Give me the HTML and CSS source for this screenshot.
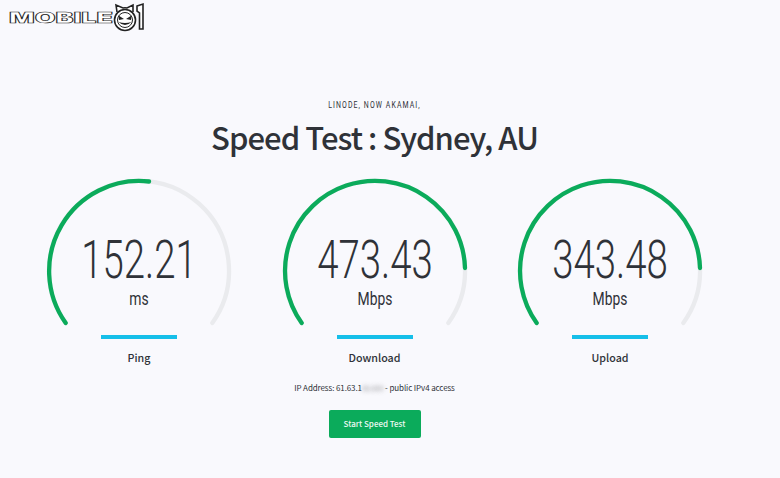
FILE: index.html
```html
<!DOCTYPE html>
<html>
<head>
  <title>Speed Test</title>
  <meta name="viewport" content="width=device-width, initial-scale=1.0">
  <link rel="stylesheet" href="styles.css">
</head>
<body>
  <div class="logo">
    <svg width="150" height="34" viewBox="0 0 150 34">
      <text class="logo-text" x="9" y="23" textLength="104" lengthAdjust="spacingAndGlyphs">MOBILE</text>
      <path class="logo-line" d="M117 12 L116 5 L123 8 Q125 7.500 127 8 L133 5 L133 12"/>
      <circle class="logo-line" cx="125" cy="20" r="10.500"/>
      <circle class="logo-line-thin" cx="125" cy="20" r="7.500"/>
      <path class="logo-fill" d="M118.500 15.500 L124 19 L119 20 Z M131.500 15.500 L126 19 L131 20 Z M118.500 22 Q125 28 131.500 22 Q125 24 118.500 22 Z"/>
      <path class="logo-line" d="M137 6 L143 4 L143 29 L139.500 29 L139.500 13 L137 11 Z"/>
    </svg>
  </div>

  <div class="container">
    <div class="header">
      <p class="kicker">LINODE, NOW AKAMAI,</p>
      <h1>Speed Test : Sydney, AU</h1>
    </div>

    <div class="gauges">
      <div class="gauge">
        <div class="dial">
          <svg width="190" height="160" viewBox="0 0 190 160">
            <path class="track" d="M21.700 147 A90 90 0 1 1 168.300 147"/>
            <path class="fill" d="M21.700 147 A90 90 0 0 1 105 5.500"/>
          </svg>
          <div class="reading">
            <div class="value">152.21</div>
            <div class="unit">ms</div>
          </div>
        </div>
        <div class="bar"></div>
        <div class="name">Ping</div>
      </div>

      <div class="gauge">
        <div class="dial">
          <svg width="190" height="160" viewBox="0 0 190 160">
            <path class="track" d="M21.700 147 A90 90 0 1 1 168.300 147"/>
            <path class="fill" d="M21.700 147 A90 90 0 1 1 185 92"/>
          </svg>
          <div class="reading">
            <div class="value">473.43</div>
            <div class="unit">Mbps</div>
          </div>
        </div>
        <div class="bar"></div>
        <div class="name">Download</div>
      </div>

      <div class="gauge">
        <div class="dial">
          <svg width="190" height="160" viewBox="0 0 190 160">
            <path class="track" d="M21.700 147 A90 90 0 1 1 168.300 147"/>
            <path class="fill" d="M21.700 147 A90 90 0 1 1 185 92"/>
          </svg>
          <div class="reading">
            <div class="value">343.48</div>
            <div class="unit">Mbps</div>
          </div>
        </div>
        <div class="bar"></div>
        <div class="name">Upload</div>
      </div>
    </div>

    <p class="ip">IP Address: 61.63.1<span class="blurred">xx.xxx</span> - public IPv4 access</p>
    <a href="#" class="btn">Start Speed Test</a>
  </div>
</body>
</html>
```
FILE: styles.css
```css
* {
  margin: 0;
  padding: 0;
  box-sizing: border-box;
}

body {
  font-family: 'Noto Sans CJK SC', 'Noto Sans', sans-serif;
  background: #f9f9fd;
  color: #2f3238;
  height: 478px;
  overflow: hidden;
}

.logo {
  height: 34px;
}

.logo svg {
  display: block;
}

.logo-text {
  font-family: 'Inter', sans-serif;
  font-size: 14px;
  font-weight: 900;
  fill: #fff;
  stroke: #222;
  stroke-width: 0.600;
}

.logo-line {
  fill: #fff;
  stroke: #222;
  stroke-width: 1.600;
}

.logo-line-thin {
  fill: #fff;
  stroke: #222;
  stroke-width: 1;
}

.logo-fill {
  fill: #222;
}

.container {
  width: 749px;
  text-align: center;
  padding-top: 65px;
}

.kicker {
  font-family: 'Roboto', sans-serif;
  font-size: 9.500px;
  letter-spacing: 1.500px;
  line-height: 12px;
  transform: scaleX(0.73);
}

.header h1 {
  font-size: 31px;
  font-weight: 500;
  letter-spacing: -0.950px;
  line-height: 44px;
  margin-top: 4px;
}

.gauges {
  display: grid;
  grid-template-columns: repeat(3, 235.500px);
  justify-content: center;
  margin-top: 17px;
}

.gauge {
  display: flex;
  flex-direction: column;
  align-items: center;
}

.dial {
  position: relative;
  width: 190px;
  height: 160px;
}

.dial svg {
  display: block;
}

.track,
.fill {
  fill: none;
  stroke-width: 4.300px;
  stroke-linecap: round;
}

.track {
  stroke: #eaebee;
}

.fill {
  stroke: #0bab5b;
}

.reading {
  position: absolute;
  top: 56px;
  left: 0;
  right: 0;
}

.value {
  font-family: 'Roboto', sans-serif;
  font-size: 54px;
  font-weight: 350;
  line-height: 55px;
  transform: scaleX(0.71);
}

.unit {
  font-family: 'Roboto', sans-serif;
  font-size: 19px;
  line-height: 24px;
  transform: scaleX(0.73);
}

.bar {
  width: 76px;
  height: 4px;
  background: #16bfe9;
  margin-top: -1px;
}

.name {
  font-size: 10.700px;
  font-weight: 500;
  line-height: 16px;
  margin-top: 11px;
}

.ip {
  font-size: 8px;
  letter-spacing: -0.100px;
  line-height: 14px;
  margin-top: 15px;
}

.blurred {
  color: transparent;
  text-shadow: 0 0 4px rgba(60, 60, 60, 0.5);
}

.btn {
  display: inline-block;
  width: 92px;
  height: 28px;
  line-height: 28px;
  margin-top: 15px;
  background: #0bab5b;
  color: #eef9f3;
  border-radius: 2px;
  font-size: 8px;
  font-weight: 500;
  text-decoration: none;
}
```
